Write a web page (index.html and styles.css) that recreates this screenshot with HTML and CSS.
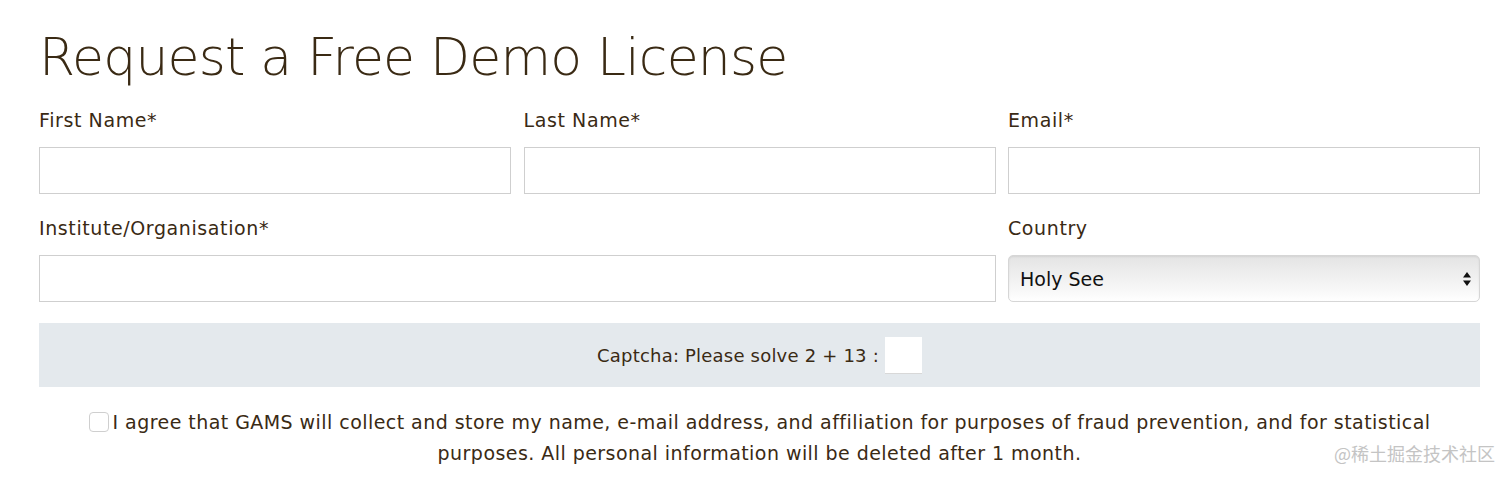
FILE: index.html
```html
<!DOCTYPE html>
<html lang="en">
<head>
<meta charset="utf-8">
<title>Request a Free Demo License</title>
<link rel="stylesheet" href="styles.css">
</head>
<body>
<main class="page">
  <h1 class="title">Request a Free Demo License</h1>
  <form class="form">
    <div class="grid">
      <div class="field">
        <label class="label" for="fn">First Name*</label>
        <input class="input" id="fn" type="text">
      </div>
      <div class="field">
        <label class="label" for="ln">Last Name*</label>
        <input class="input" id="ln" type="text">
      </div>
      <div class="field">
        <label class="label" for="em">Email*</label>
        <input class="input" id="em" type="text">
      </div>
      <div class="field span2">
        <label class="label" for="org">Institute/Organisation*</label>
        <input class="input" id="org" type="text">
      </div>
      <div class="field">
        <label class="label" for="ct">Country</label>
        <div class="select">
          <span class="select-value">Holy See</span>
          <svg class="select-arrows" width="8" height="14" viewBox="0 0 8 14"><path d="M4 0L8 5.5H0Z M4 14L8 8.5H0Z" fill="#111"/></svg>
        </div>
      </div>
    </div>
    <div class="captcha">
      <span class="captcha-text">Captcha: Please solve 2 + 13 :</span>
      <span class="captcha-box"></span>
    </div>
    <p class="consent"><span class="checkbox"></span>I agree that GAMS will collect and store my name, e-mail address, and affiliation for purposes of fraud prevention, and for statistical purposes. All personal information will be deleted after 1 month.</p>
  </form>
  <div class="watermark">@稀土掘金技术社区</div>
</main>
</body>
</html>
```

FILE: styles.css
```css
html, body {
  margin: 0;
  padding: 0;
  background: #fff;
}
body {
  font-family: "DejaVu Sans", "Noto Sans CJK SC", sans-serif;
  color: #3a2a14;
}
.page {
  position: relative;
  width: 1441px;
  height: 480px;
  padding-left: 39px;
  box-sizing: content-box;
}
.title {
  margin: 0;
  padding-top: 25px;
  font-size: 52px;
  line-height: 64px;
  font-weight: 200;
  letter-spacing: -0.8px;
  color: #3a2a14;
}
.form {
  margin-top: 19px;
}
.grid {
  display: grid;
  grid-template-columns: 472px 472px 472px;
  column-gap: 12.5px;
  row-gap: 22px;
}
.span2 {
  grid-column: span 2;
}
.field {
  display: flex;
  flex-direction: column;
}
.label {
  font-size: 19px;
  line-height: 24px;
  letter-spacing: 0.6px;
  margin-bottom: 15px;
}
.input {
  height: 47px;
  box-sizing: border-box;
  border: 1px solid #cfcfcf;
  margin: 0;
  padding: 0 10px;
  background: #fff;
}
.select {
  height: 47px;
  box-sizing: border-box;
  border: 1px solid #d6d6d6;
  border-radius: 5px;
  background: linear-gradient(#e4e4e4, #f6f6f6 70%, #fff);
  box-shadow: inset 0 1px 2px rgba(0,0,0,0.08);
  display: flex;
  align-items: center;
  justify-content: space-between;
  padding: 0 8px 0 11px;
}
.select-value {
  font-size: 19px;
  color: #111;
}
.captcha {
  margin-top: 21px;
  height: 64px;
  background: #e4e9ed;
  display: flex;
  align-items: center;
  justify-content: center;
  gap: 6px;
}
.captcha-text {
  font-size: 18px;
  letter-spacing: 0.2px;
}
.captcha-box {
  width: 37px;
  height: 37px;
  background: #fff;
  border-bottom: 1px solid #d8d8d8;
  box-sizing: border-box;
}
.consent {
  margin: 20px 0 0;
  padding: 0 40px;
  text-align: center;
  font-size: 19px;
  line-height: 31px;
  letter-spacing: 0.45px;
}
.checkbox {
  display: inline-block;
  width: 20px;
  height: 20px;
  box-sizing: border-box;
  border: 1px solid #cfcfcf;
  border-radius: 4px;
  background: #fff;
  vertical-align: -3px;
  margin-right: 4px;
}
.watermark {
  position: absolute;
  right: -15px;
  top: 441px;
  font-size: 18px;
  line-height: 24px;
  color: #c4c4c4;
  font-family: "Noto Sans CJK SC", sans-serif;
}
```
